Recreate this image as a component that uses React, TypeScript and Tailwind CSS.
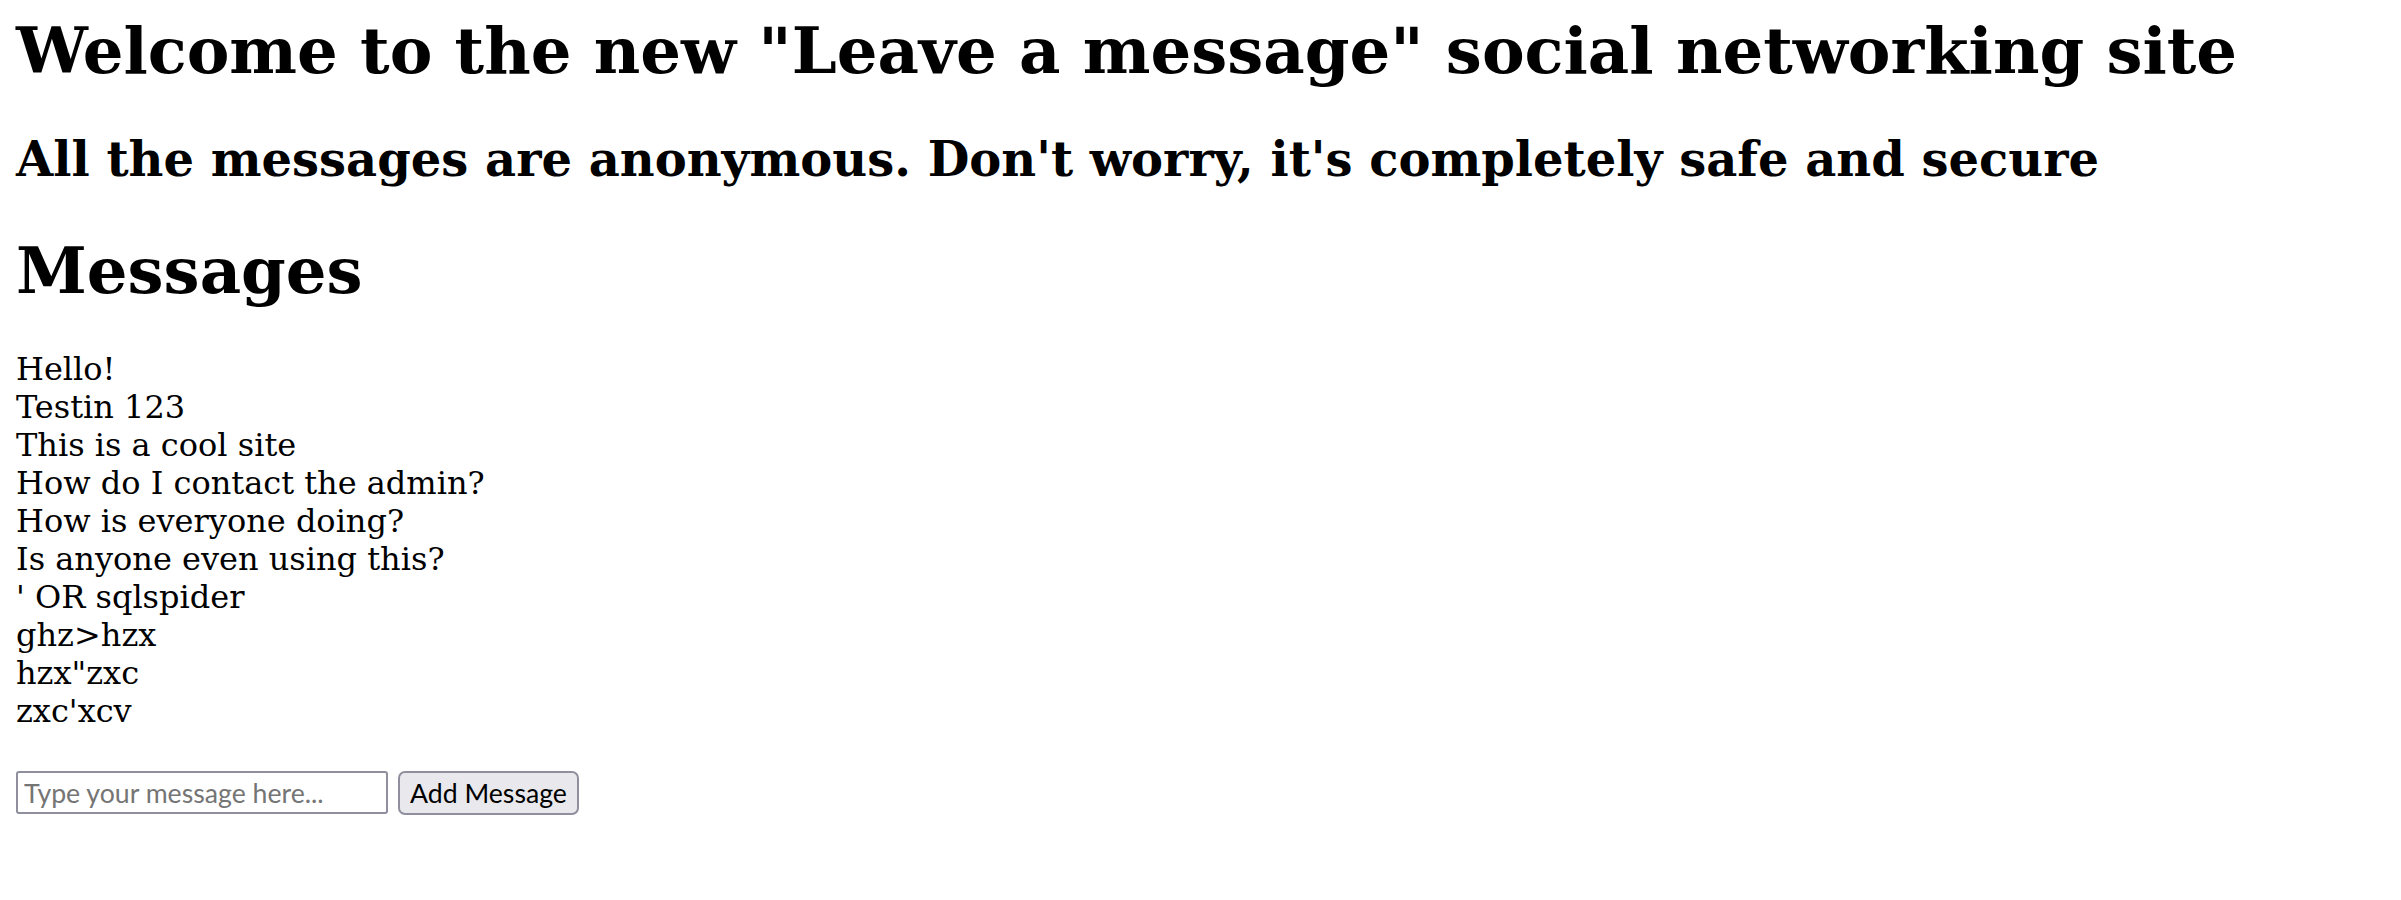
import { useState } from 'react';

const messages = [
  'Hello!',
  'Testin 123',
  'This is a cool site',
  'How do I contact the admin?',
  'How is everyone doing?',
  'Is anyone even using this?',
  "' OR sqlspider",
  'ghz>hzx',
  'hzx"zxc',
  "zxc'xcv",
];

export default function App() {
  const [text, setText] = useState('');

  return (
    <div className="min-h-screen bg-white px-4 pt-[13px] font-['DejaVu_Serif',serif] leading-[normal] text-black">
      <h1 className="text-[64px] font-bold leading-[normal]">
        Welcome to the new "Leave a message" social networking site
      </h1>
      <h2 className="mt-[43px] text-[48px] font-bold leading-[normal]">
        All the messages are anonymous. Don't worry, it's completely safe and secure
      </h2>
      <h1 className="mt-[46px] text-[64px] font-bold leading-[normal]">Messages</h1>
      <div className="mt-[42px] text-[32px] leading-[normal]">
        {messages.map((m, i) => (
          <div key={i}>{m}</div>
        ))}
      </div>
      <form
        className="mt-[41px] flex items-start gap-[10px] font-['Lato',sans-serif] text-[26.67px] leading-[normal]"
        onSubmit={(e) => e.preventDefault()}
      >
        <input
          value={text}
          onChange={(e) => setText(e.target.value)}
          placeholder="Type your message here..."
          className="h-[43px] w-[372px] rounded-[3px] border-2 border-[#8f8f9d] bg-white px-[6px] text-black placeholder:text-[#757575] outline-none"
        />
        <button
          type="submit"
          className="h-[44px] rounded-[7px] border-2 border-[#8f8f9d] bg-[#e9e9ed] px-[10px] text-black"
        >
          Add Message
        </button>
      </form>
    </div>
  );
}
